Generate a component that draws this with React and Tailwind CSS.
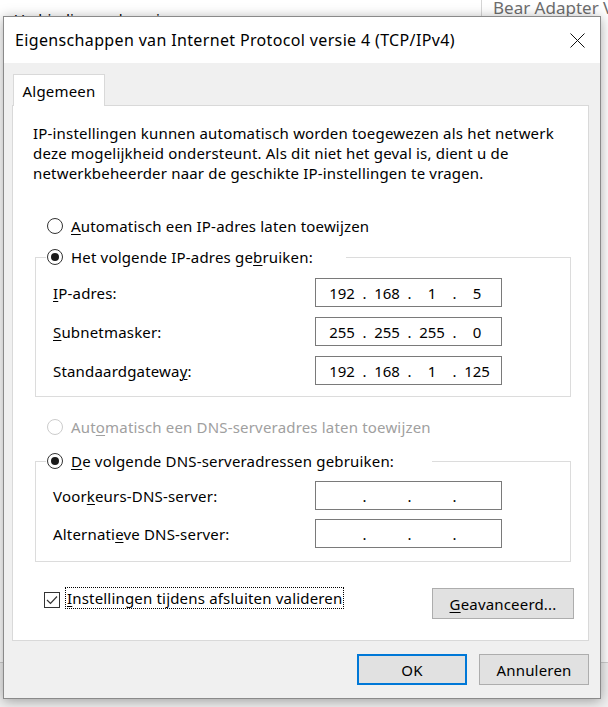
import React from "react";

const font = "font-['Segoe_UI','Noto_Sans',sans-serif]";

function Radio({ checked, disabled }) {
  return (
    <span
      className={`flex h-[16px] w-[16px] shrink-0 items-center justify-center rounded-full border bg-white ${
        disabled ? "border-[#cccccc]" : "border-[#333333]"
      }`}
    >
      {checked && <span className="h-[8px] w-[8px] rounded-full bg-[#1a1a1a]" />}
    </span>
  );
}

function IpBox({ parts }) {
  return (
    <div className="flex h-[29px] w-[187px] items-center border border-[#7a7a7a] bg-white pl-[8px] text-[15px] leading-[20px] tracking-normal text-black">
      {parts.map((p, i) => (
        <React.Fragment key={i}>
          <span className="w-[36px] text-center">{p}</span>
          {i < 3 && <span className="w-[9px] text-center">.</span>}
        </React.Fragment>
      ))}
    </div>
  );
}

function Field({ label, parts }) {
  return (
    <div className="grid grid-cols-[262px_187px] items-center">
      <span>{label}</span>
      <IpBox parts={parts} />
    </div>
  );
}

function Button({ children, primary, className = "" }) {
  return (
    <div
      className={`flex h-[31px] items-center justify-center bg-[#e1e1e1] text-[15px] text-black ${
        primary ? "border-2 border-[#0078d7]" : "border border-[#adadad]"
      } ${className}`}
    >
      {children}
    </div>
  );
}

const U = ({ children }) => <u className="underline decoration-1 underline-offset-[2px]">{children}</u>;

export default function App() {
  const empty = ["", "", "", ""];
  return (
    <div className={`relative h-[707px] w-[608px] overflow-hidden bg-[#f0f0f0] ${font}`}>
      {/* window behind the dialog */}
      <div className="absolute left-0 top-0 h-[663px] w-[608px] border-b border-[#d0d0d0] bg-white">
        <div className="absolute left-[15px] top-[9px] text-[15px] leading-[20px] text-black">
          Verbinding maken via:
        </div>
        <div className="absolute left-[481px] top-[-2px] h-[40px] w-[140px] overflow-hidden border-l border-[#d5d5d5] pl-[11px] text-[17px] leading-[20px] whitespace-nowrap text-[#6d6d6d]">
          Bear Adapter V
        </div>
      </div>

      {/* dialog */}
      <div className="absolute left-[3px] top-[16px] flex h-[683px] w-[598px] flex-col border border-[#8a8a8a] bg-[#f0f0f0] shadow-[0_2px_12px_rgba(0,0,0,0.35)]">
        {/* title bar */}
        <div className="flex h-[46px] items-center justify-between bg-white pl-[11px]">
          <span className="text-[16px] tracking-[0.35px] text-black">Eigenschappen van Internet Protocol versie 4 (TCP/IPv4)</span>
          <div className="flex h-[46px] w-[46px] items-center justify-center">
            <svg width="15" height="15" viewBox="0 0 15 15">
              <path d="M0.5 0.5 L14.5 14.5 M14.5 0.5 L0.5 14.5" stroke="#111" strokeWidth="1" fill="none" />
            </svg>
          </div>
        </div>

        {/* body */}
        <div className="flex flex-1 flex-col px-[8px] pr-[11px] pt-[11px] text-[15px] leading-[20px] tracking-[0.18px] text-black">
          <div className="relative z-10 -mb-[1px] ml-[1px] flex h-[32px] w-[92px] items-center justify-center border border-b-0 border-[#d9d9d9] bg-white">
            Algemeen
          </div>
          <div className="flex flex-col border border-[#d9d9d9] bg-white pb-[21px] pt-[17px]">
            <p className="pl-[20px]">
              IP-instellingen kunnen automatisch worden toegewezen als het netwerk
              <br />
              deze mogelijkheid ondersteunt. Als dit niet het geval is, dient u de
              <br />
              netwerkbeheerder naar de geschikte IP-instellingen te vragen.
            </p>

            <div className="ml-[34px] mt-[33px] flex h-[20px] items-center gap-[8px]">
              <Radio />
              <span>
                <U>A</U>utomatisch een IP-adres laten toewijzen
              </span>
            </div>

            <div className="ml-[22px] mr-[17px] mt-[21px] border border-[#dcdcdc] pb-[11px]">
              <div className="-mt-[11px] ml-[10px] flex h-[20px] w-[300px] items-center gap-[8px] bg-white pl-[1px]">
                <Radio checked />
                <span>
                  Het volgende IP-adres ge<U>b</U>ruiken:
                </span>
              </div>
              <div className="flex flex-col gap-[10px] pl-[17px] pt-[11px]">
                <Field label={<><U>I</U>P-adres:</>} parts={["192", "168", "1", "5"]} />
                <Field label={<><U>S</U>ubnetmasker:</>} parts={["255", "255", "255", "0"]} />
                <Field label={<>Standaardgatewa<U>y</U>:</>} parts={["192", "168", "1", "125"]} />
              </div>
            </div>

            <div className="ml-[34px] mt-[20px] flex h-[20px] items-center gap-[8px] text-[#a0a0a0]">
              <Radio disabled />
              <span>
                Aut<U>o</U>matisch een DNS-serveradres laten toewijzen
              </span>
            </div>

            <div className="ml-[22px] mr-[17px] mt-[24px] border border-[#dcdcdc] pb-[13px]">
              <div className="-mt-[11px] ml-[10px] flex h-[20px] w-[386px] items-center gap-[8px] bg-white pl-[1px]">
                <Radio checked />
                <span>
                  <U>D</U>e volgende DNS-serveradressen gebruiken:
                </span>
              </div>
              <div className="flex flex-col gap-[9px] pl-[17px] pt-[10px]">
                <Field label={<>Voor<U>k</U>eurs-DNS-server:</>} parts={empty} />
                <Field label={<>Alternati<U>e</U>ve DNS-server:</>} parts={empty} />
              </div>
            </div>

            <div className="ml-[31px] mr-[14px] mt-[25px] flex items-start justify-between">
              <div className="flex items-center gap-[5px] pt-[3px]">
                <span className="flex h-[16px] w-[16px] items-center justify-center border border-[#333333] bg-white">
                  <svg width="12" height="10" viewBox="0 0 12 10">
                    <path d="M1 5 L4.5 8.5 L11 1.5" stroke="#333" strokeWidth="1.2" fill="none" />
                  </svg>
                </span>
                <span className="-mt-[3px] border border-dotted border-black px-[1px] leading-[20px]">
                  <U>I</U>nstellingen tijdens afsluiten valideren
                </span>
              </div>
              <Button className="mt-[1px] w-[142px]">
                <span>
                  <U>G</U>eavanceerd...
                </span>
              </Button>
            </div>
          </div>

          <div className="mt-[13px] flex justify-end gap-[12px]">
            <Button primary className="w-[110px]">OK</Button>
            <Button className="w-[110px]">Annuleren</Button>
          </div>
        </div>
      </div>
    </div>
  );
}
